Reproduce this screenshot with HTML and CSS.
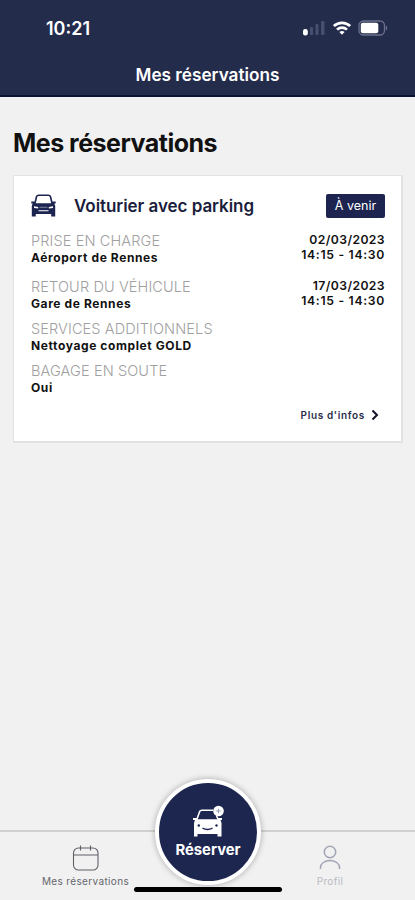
FILE: index.html
```
<!DOCTYPE html>
<html lang="fr">
<head>
    <meta charset="UTF-8">
    <meta name="viewport" content="width=device-width, initial-scale=1.0">
    <title>Mes réservations</title>
    <link rel="stylesheet" href="styles.css">
</head>
<body>
    <header class="header">
        <div class="status-bar">
            <span class="time">10:21</span>
            <div class="status-icons">
                <svg class="signal" width="23" height="16" viewBox="0 0 23 16">
                    <rect x="0" y="9" width="4.8" height="6.4" rx="2.2" fill="#fff"/>
                    <rect x="7" y="7" width="3" height="8" rx="1" fill="#48506f"/>
                    <rect x="12.5" y="4" width="3" height="11" rx="1" fill="#48506f"/>
                    <rect x="18" y="1" width="3.5" height="14" rx="1" fill="#48506f"/>
                </svg>
                <svg class="wifi" width="18" height="14" viewBox="0 0 18 14" fill="none" stroke="#fff" stroke-width="2.7">
                    <path d="M.9 5.1a11.6 11.6 0 0 1 16.2 0"/>
                    <path d="M4 8.6a7.2 7.2 0 0 1 10 0"/>
                    <path d="M6.4 11.1a3.8 3.8 0 0 1 5.2 0L9 13.8z" fill="#fff" stroke="none"/>
                </svg>
                <svg class="battery" width="30" height="16" viewBox="0 0 30 16">
                    <rect x="1" y="1" width="25.5" height="14" rx="4.5" fill="none" stroke="#6a708b" stroke-width="1.3"/>
                    <rect x="2.8" y="2.8" width="17.5" height="10.4" rx="2" fill="#fff"/>
                    <path d="M27.8 5.5c2 1 2 4 0 5z" fill="#6a708b"/>
                </svg>
            </div>
        </div>
        <div class="header-title">Mes réservations</div>
    </header>

    <main class="content">
        <h1>Mes réservations</h1>

        <section class="card">
            <div class="card-head">
                <svg class="car" width="26" height="24" viewBox="0 0 26 24">
                    <path d="M3.8 10L5.5 2.8Q6 1.2 7.6 1.2h9.8q1.600 0 2.100 1.600L21.200 10" fill="none" stroke="#1d2450" stroke-width="1.6"/>
                    <path d="M.3 7.500h3.400l.4 1.700h16.800l.4-1.700h3.400v2h-1.400l.9 2.300v10.700h-4V20H4.800v2.500h-4V11.800l.9-2.300H.3z" fill="#1d2450"/>
                    <path d="M3 12.300l4.200.7v1.600L3 14zM22 12.300l-4.200.7v1.600L22 14zM7.500 16.300h10v1h-10z" fill="#fff"/>
                    <path d="M8.500 13.300h8" stroke="#9699af" stroke-width=".8"/>
                </svg>
                <h2>Voiturier avec parking</h2>
                <span class="badge">À venir</span>
            </div>

            <div class="row row-first">
                <div>
                    <div class="label">PRISE EN CHARGE</div>
                    <div class="value">Aéroport de Rennes</div>
                </div>
                <div class="date">
                    <div>02/03/2023</div>
                    <div class="hours">14:15 - 14:30</div>
                </div>
            </div>
            <div class="row">
                <div>
                    <div class="label">RETOUR DU VÉHICULE</div>
                    <div class="value">Gare de Rennes</div>
                </div>
                <div class="date">
                    <div>17/03/2023</div>
                    <div class="hours">14:15 - 14:30</div>
                </div>
            </div>
            <div class="row">
                <div>
                    <div class="label">SERVICES ADDITIONNELS</div>
                    <div class="value">Nettoyage complet GOLD</div>
                </div>
            </div>
            <div class="row">
                <div>
                    <div class="label">BAGAGE EN SOUTE</div>
                    <div class="value">Oui</div>
                </div>
            </div>

            <div class="more">
                <span>Plus d'infos</span>
                <svg width="8" height="12" viewBox="0 0 8 12" fill="none" stroke="#111328" stroke-width="2">
                    <path d="M1.5 1.5L6 6l-4.5 4.5"/>
                </svg>
            </div>
        </section>
    </main>

    <nav class="tab-bar">
        <div class="tab">
            <svg width="28" height="27" viewBox="0 0 28 27" fill="none" stroke="#5f6166" stroke-width="1.1">
                <rect x="1.5" y="3" width="24.5" height="22" rx="5"/>
                <path d="M1.5 10h24.500M8.500 .5v5M18.500 .5v5"/>
            </svg>
            <span class="tab-text">Mes réservations</span>
        </div>
        <div class="tab tab-profile">
            <svg width="22" height="27" viewBox="0 0 22 27" fill="none" stroke="#a2a5b4" stroke-width="1.5">
                <circle cx="11" cy="7" r="5.7"/>
                <path d="M1.5 24v-1.500c0-4 4.300-7 9.500-7s9.500 3 9.500 7V24"/>
            </svg>
            <span class="tab-text">Profil</span>
        </div>
        <div class="reserve">
            <svg width="32" height="33" viewBox="0 0 32 33">
                <path d="M5 14L7.500 7q.6-1.700 2.300-1.700H21M24.500 11l1.500 3" fill="none" stroke="#fff" stroke-width="1.6"/>
                <path d="M1 13h4l.5 1.200h20L26 13h4v2h-1.500l1 3v13.500h-4V29h-20v2.500H2V18l1-3H1z" fill="#fff"/>
                <circle cx="26.5" cy="6" r="5.3" fill="#fff"/>
                <path d="M24.200 6h4.600M26.500 3.700v4.600" stroke="#9a9fb5" stroke-width="1.1"/>
                <circle cx="6.8" cy="20.5" r="1.2" fill="#1d2450"/>
                <circle cx="24.5" cy="20.5" r="1.2" fill="#1d2450"/>
                <path d="M10.500 23.200q5 2.600 10 0" fill="none" stroke="#1d2450" stroke-width="1.3"/>
            </svg>
            <span>Réserver</span>
        </div>
        <div class="home-indicator"></div>
    </nav>
</body>
</html>
```
FILE: styles.css
```
* {
    box-sizing: border-box;
}

body {
    margin: 0;
    height: 900px;
    display: flex;
    flex-direction: column;
    overflow: hidden;
    background: #f1f1f1;
    color: #111;
    font-family: Inter, "Liberation Sans", sans-serif;
}

h1, h2 {
    margin: 0;
}

svg {
    display: block;
    flex-shrink: 0;
}

/* Header */
.header {
    height: 97px;
    background: #242c4c;
    border-bottom: 2px solid #0c1236;
    color: #fff;
}

.status-bar {
    height: 56px;
    padding: 0 27px 0 46px;
    display: flex;
    align-items: center;
    justify-content: space-between;
}

.time {
    font-size: 18px;
    font-weight: 600;
}

.status-icons {
    display: flex;
    align-items: center;
    gap: 7px;
}

.header-title {
    line-height: 37px;
    text-align: center;
    font-size: 17.2px;
    font-weight: 600;
}

/* Reservations */
.content {
    flex: 1;
    padding: 29px 12px 0 13px;
}

h1 {
    line-height: 34px;
    font-size: 25px;
    font-weight: 700;
    letter-spacing: -0.5px;
}

.card {
    height: 268px;
    margin-top: 15px;
    padding: 18px 16px 0 17px;
    background: #fff;
    border: 1px solid #e2e2e2;
    border-width: 1px 2px 2px 1px;
}

.card-head {
    height: 24px;
    margin-bottom: 14px;
    display: flex;
    align-items: center;
}

h2 {
    margin-left: 17px;
    color: #1b1d3c;
    font-size: 17px;
    font-weight: 600;
    letter-spacing: -0.05px;
}

.badge {
    width: 59px;
    margin-left: auto;
    line-height: 24px;
    background: #1d2450;
    border-radius: 2px;
    color: #fff;
    font-size: 12.5px;
    text-align: center;
}

.row {
    height: 42px;
    display: flex;
    justify-content: space-between;
}

.row-first {
    height: 46px;
}

.label {
    line-height: 17px;
    color: #a0a0a0;
    font-size: 14.5px;
    font-weight: 300;
    letter-spacing: 0.12px;
}

.value {
    line-height: 17px;
    font-size: 12px;
    font-weight: 700;
    letter-spacing: 0.6px;
}

.date {
    line-height: 15px;
    font-size: 12.2px;
    font-weight: 600;
    letter-spacing: 0.4px;
    text-align: right;
}

.hours {
    letter-spacing: 0.7px;
}

.more {
    height: 21px;
    padding-right: 6px;
    display: flex;
    align-items: center;
    justify-content: flex-end;
    gap: 6px;
    color: #292b48;
    font-size: 10px;
    font-weight: 600;
    letter-spacing: 0.65px;
}

/* Bottom tabs */
.tab-bar {
    position: relative;
    height: 70px;
    padding: 13px 28px 0 35px;
    display: flex;
    justify-content: space-between;
    border-top: 2px solid #d0d0d0;
}

.tab {
    width: 101px;
    display: flex;
    flex-direction: column;
    align-items: center;
    color: #65676d;
}

.tab-profile {
    width: 114px;
    color: #b8bac4;
}

.tab-text {
    line-height: 18px;
    font-size: 10px;
    letter-spacing: 0.35px;
    white-space: nowrap;
}

/* Round button sits over the top edge of the tab bar */
.reserve {
    position: absolute;
    top: -53px;
    left: 155px;
    width: 106px;
    height: 106px;
    padding-top: 22px;
    display: flex;
    flex-direction: column;
    align-items: center;
    background: #1d264f;
    border: 4px solid #fff;
    border-radius: 50%;
    box-shadow: 0 0 6px rgba(0, 0, 0, 0.3);
    color: #fff;
    font-size: 14.8px;
    font-weight: 700;
    line-height: 24px;
}

.home-indicator {
    position: absolute;
    top: 55px;
    left: 134px;
    width: 148px;
    height: 5px;
    background: #000;
    border-radius: 3px;
}
```
